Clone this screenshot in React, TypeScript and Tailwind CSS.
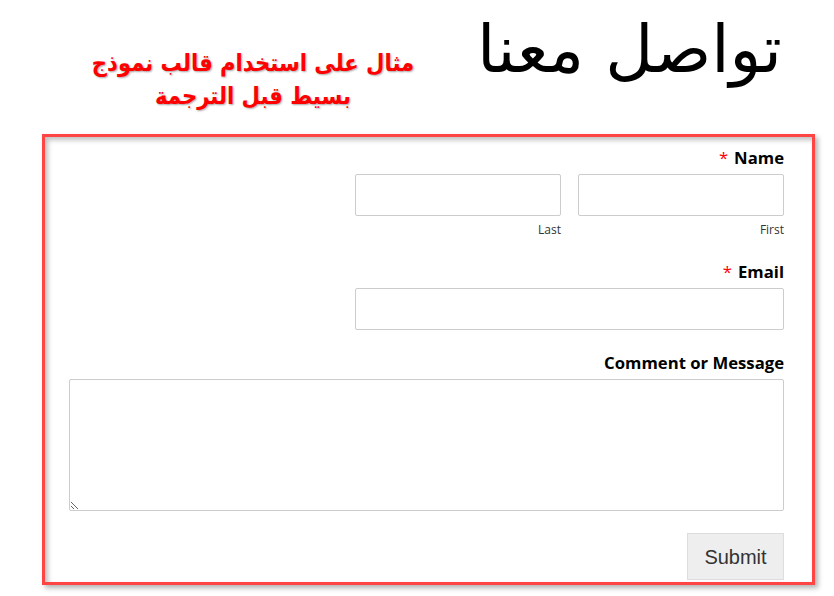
import React from "react";

export default function App() {
  return (
    <div className="w-[834px] h-[596px] bg-white overflow-hidden relative" style={{ fontFamily: '"Open Sans", "DejaVu Sans", sans-serif' }}>
      <div dir="rtl" className="flex items-start h-[134px]">
        <h1 className="mr-[52px] mt-[8px] text-[66px] leading-[84px] font-normal text-black font-['DejaVu_Sans',sans-serif]">
          تواصل معنا
        </h1>
        <div className="mr-[44px] mt-[47px] w-[360px] text-center text-[23.5px] leading-[33px] font-bold text-[#ff0000] font-['DejaVu_Sans_Condensed','DejaVu_Sans',sans-serif] [text-shadow:1px_1px_2px_rgba(0,0,0,0.35)]">
          مثال على استخدام قالب نموذج
          <br />
          بسيط قبل الترجمة
        </div>
      </div>
      <div className="ml-[42px] w-[773px] h-[451px] border-[3px] border-[#ff4444] shadow-[3px_3px_5px_rgba(0,0,0,0.3),inset_3px_3px_5px_rgba(0,0,0,0.25)] pl-[24px] pr-[28px] pt-[10px]">
        <form dir="rtl" className="flex flex-col text-black">
          <div className="w-[429px]">
            <label className="block text-[16.7px] leading-[22px] font-bold">
              Name<span className="text-[#ff0000] font-normal mr-[6px]">*</span>
            </label>
            <div className="flex gap-[17px] mt-[5px]">
              <div className="flex-1">
                <input className="block w-full h-[42px] border border-[#cccccc] rounded-[2px] bg-white" />
                <div className="text-[12px] leading-[18px] mt-[5px] text-[#333]">First</div>
              </div>
              <div className="flex-1">
                <input className="block w-full h-[42px] border border-[#cccccc] rounded-[2px] bg-white" />
                <div className="text-[12px] leading-[18px] mt-[5px] text-[#333]">Last</div>
              </div>
            </div>
          </div>
          <div className="w-[429px] mt-[22px]">
            <label className="block text-[16.7px] leading-[22px] font-bold">
              Email<span className="text-[#ff0000] font-normal mr-[6px]">*</span>
            </label>
            <input className="block w-full h-[42px] mt-[5px] border border-[#cccccc] rounded-[2px] bg-white" />
          </div>
          <div className="mt-[22px]">
            <label className="block text-[16.7px] leading-[22px] font-bold">Comment or Message</label>
            <textarea className="block w-full h-[132px] mt-[5px] border border-[#cccccc] rounded-[2px] bg-white" />
          </div>
          <div className="mt-[22px]">
            <button type="button" className="w-[97px] h-[47px] bg-[#eeeeee] border border-[#dddddd] text-[20px] text-[#333] font-['Liberation_Sans',Arial,sans-serif]">
              Submit
            </button>
          </div>
        </form>
      </div>
    </div>
  );
}
